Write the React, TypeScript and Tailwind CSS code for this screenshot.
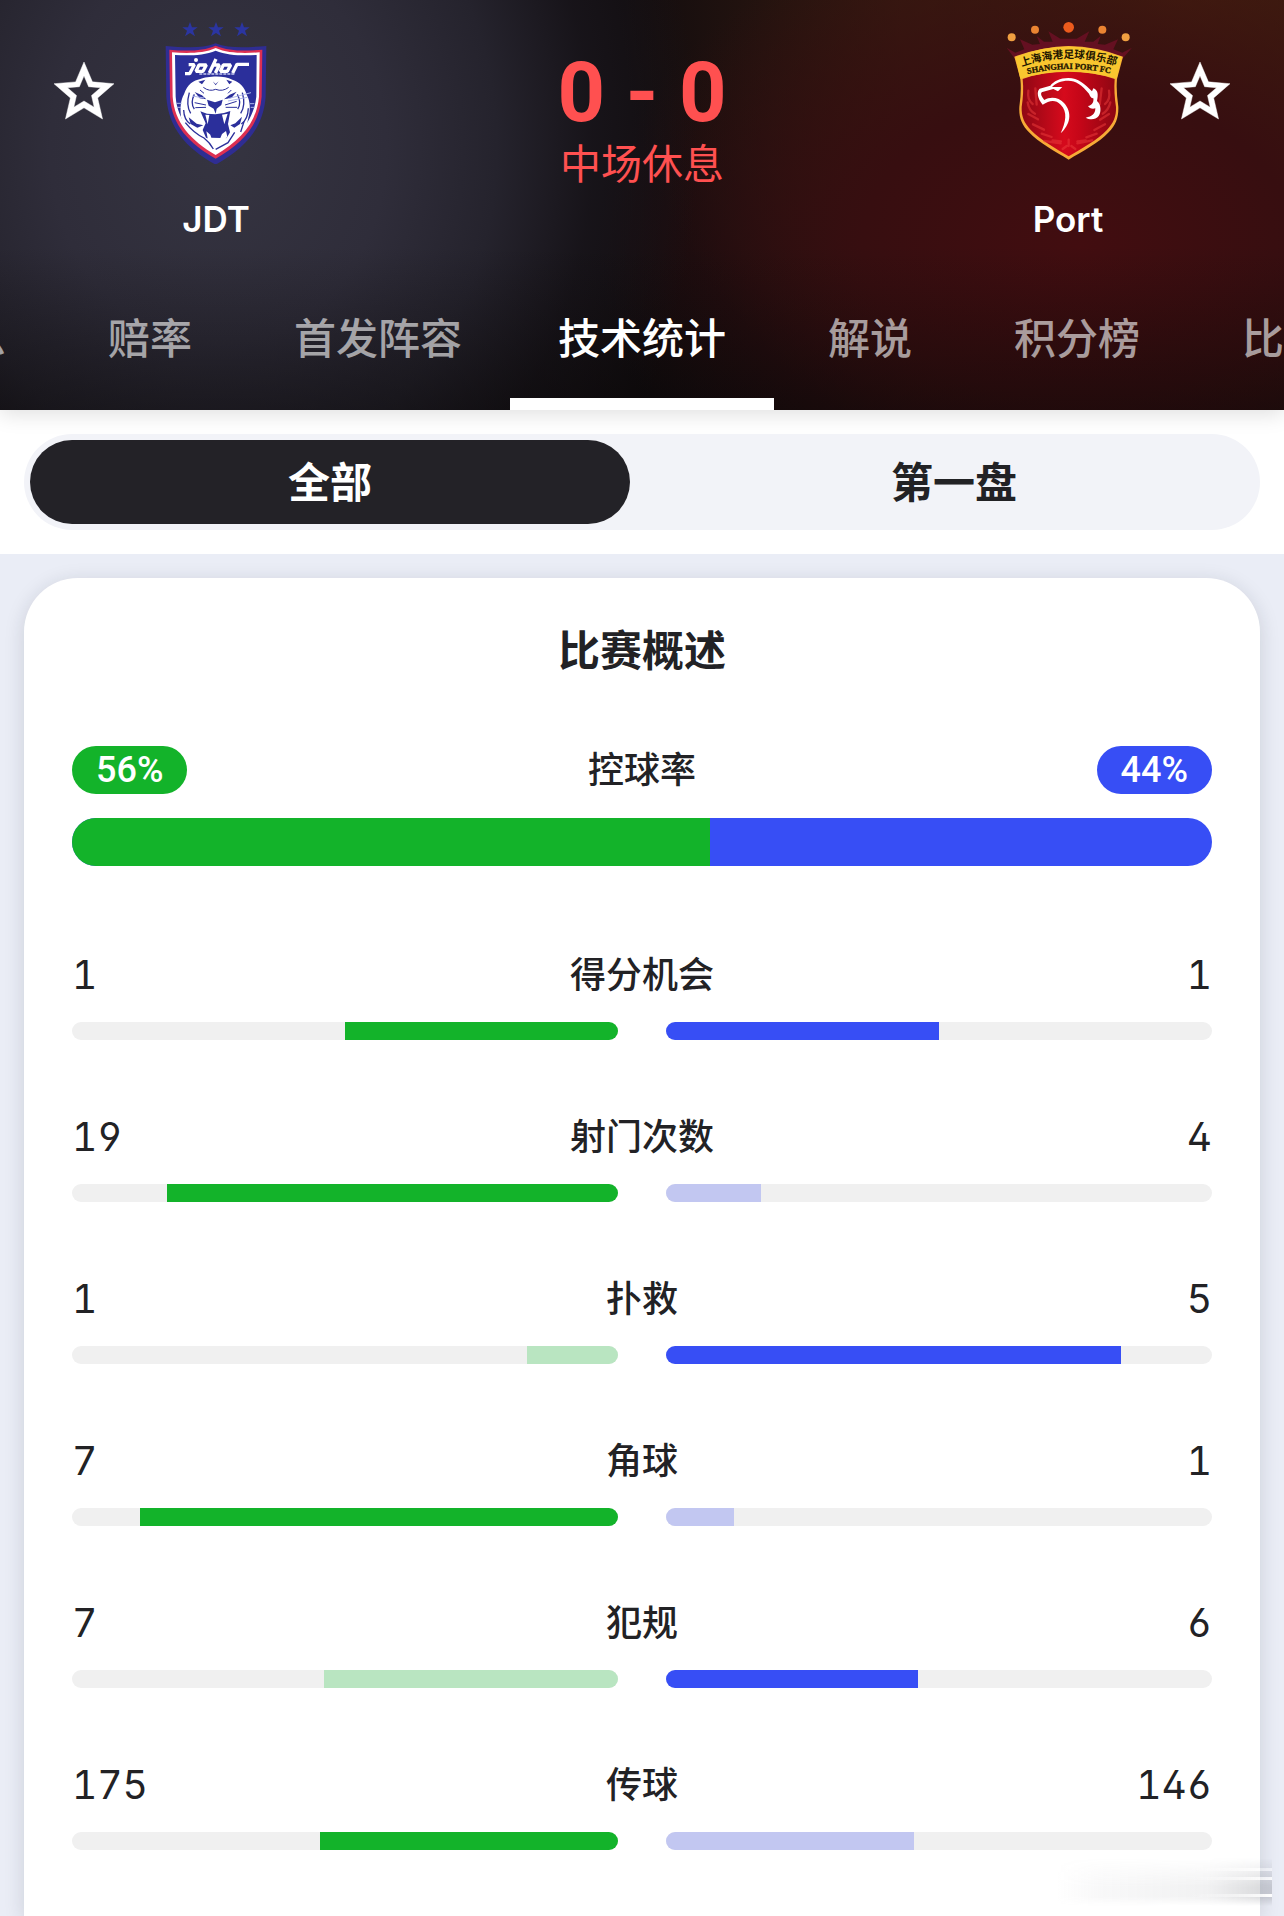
import { useState } from "react";

const FONT = "font-[Inter,'Noto_Sans_CJK_SC',sans-serif]";

type Stat = { label: string; home: number; away: number; lowerIsBetter?: boolean };

const stats: Stat[] = [
  { label: "得分机会", home: 1, away: 1 },
  { label: "射门次数", home: 19, away: 4 },
  { label: "扑救", home: 1, away: 5 },
  { label: "角球", home: 7, away: 1 },
  { label: "犯规", home: 7, away: 6, lowerIsBetter: true },
  { label: "传球", home: 175, away: 146 },
];

function StarButton({ label }: { label: string }) {
  return (
    <button type="button" aria-label={label} className="mt-14 size-18 shrink-0 text-white">
      <svg viewBox="0 0 24 24" className="size-18" fill="currentColor" stroke="currentColor" strokeWidth=".15">
        <path d="M22 9.24l-7.19-.62L12 2 9.19 8.63 2 9.24l5.46 4.73L5.82 21 12 17.27 18.18 21l-1.63-7.03L22 9.24zM12 15l-3.4 2.05.9-3.87-3-2.6 3.96-.35L12 6.6l1.54 3.63 3.96.35-3 2.6.9 3.87L12 15z" />
      </svg>
    </button>
  );
}

function SmallStar({ x }: { x: number }) {
  return (
    <path
      transform={`translate(${x} 89)`}
      d="M0-23 6-7 23-7 9 3 15 20 0 10-15 20-9 3-23-7-6-7Z"
      fill="#2b35a0"
    />
  );
}

function JohorCrest() {
  return (
    <svg viewBox="432 60 432 432" className="size-36" role="img" aria-label="Johor">
      <SmallStar x={570} />
      <SmallStar x={648} />
      <SmallStar x={726} />
      <path
        d="M497 138C550 142 605 147 647 130C690 147 745 142 799 138L797 290C790 385 735 445 647 494C560 445 505 385 499 290Z"
        fill="#2f2d92"
      />
      <path
        d="M508 149C555 153 605 155 647 137C690 155 740 153 787 149L785 290C778 375 728 430 647 476C567 430 515 375 510 290Z"
        fill="#dc2f52"
      />
      <path
        d="M516 157C560 160 610 161 647 144C685 161 735 160 779 157L777 290C770 368 722 421 647 465C573 421 523 368 518 290Z"
        fill="#fff"
      />
      <path
        d="M525 165C565 167 612 167 647 152C683 167 730 167 770 165L769 290C761 362 715 413 647 454C580 413 532 362 527 290Z"
        fill="#2b2f9b"
      />
      <g fill="none" stroke="#fff" strokeWidth="10" strokeLinejoin="bevel">
        <path d="M566 194H583L569 221H555M597 195H619L609 214H588ZM648 177 628 219M637 195H658L646 219M670 195H692L682 214H661ZM698 219 711 193H747" />
      </g>
      <path d="M598 222H706" stroke="#c9cdf2" strokeWidth="5" strokeDasharray="9 3" />
      <circle cx="588" cy="180" r="6" fill="#fff" />
      <path
        d="M552 283C562 251 581 242 601 237C621 229 672 225 697 239C719 247 734 260 740 284C751 302 752 331 745 353L741 373 727 398 706 418 680 438 647 457 618 440 588 416 554 380 543 351C540 322 542 301 552 283Z"
        fill="#fff"
      />
      <g fill="#2b2f9b">
        <path d="M601 334 621 341 646 343 672 339 691 333 684 372 690 397 680 414 647 423 618 413 608 390 617 370Z" />
        <path d="M621 299 645 307 668 299 664 315 650 326 647 341 641 326 626 317Z" />
        <path d="M584 276 606 286 619 298 599 295ZM710 275 689 284 672 298 694 294Z" />
        <path d="M595 245 616 239 606 253ZM697 245 679 239 688 253ZM638 244 647 252 656 244 647 256Z" />
        <path d="M566 352 590 371 610 376 592 383 572 372ZM726 350 706 370 691 376 703 383 720 372Z" />
      </g>
      <path
        d="M616 344 623 373 628 345ZM666 344 673 373 683 341ZM619 394 631 404 634 413 661 414 666 402 678 393 682 410 670 425 647 432 625 425Z"
        fill="#fff"
      />
      <g fill="none" stroke="#2b2f9b" strokeWidth="4">
        <path d="M568 278Q557 317 572 340M583 283Q570 309 583 327M727 278Q738 317 722 340M712 283Q726 309 713 327" />
        <path d="M551 330Q552 360 571 372M745 325Q744 358 724 372" />
        <path d="M556 368Q582 400 612 414 630 428 640 447M647 448 684 428 704 397M732 365 722 396" />
        <path d="M610 262Q628 276 647 268 668 276 686 262M600 270 612 280M694 270 684 280" strokeWidth="3" />
        <path d="M618 315 584 308M618 322 586 323M675 315 710 304M677 322 711 322" strokeWidth="3" />
      </g>
      <path
        d="M612 294 577 288M684 296 753 278M684 303 742 292M529 310H545M530 322H543M750 311H763M752 322H764"
        stroke="#aeb7ec"
        strokeWidth="3"
      />
    </svg>
  );
}

function PortCrest() {
  return (
    <svg viewBox="408 60 432 432" className="size-36" role="img" aria-label="Shanghai Port FC">
      <defs>
        <linearGradient id="port-red" x1="0" x2="1">
          <stop offset="0" stopColor="#8f0714" />
          <stop offset=".45" stopColor="#d60a1c" />
          <stop offset=".62" stopColor="#c50618" />
          <stop offset="1" stopColor="#8d0712" />
        </linearGradient>
        <path id="port-cn" d="M478 202Q625 148 775 199" />
        <path id="port-en" d="M483 227Q625 188 771 225" />
      </defs>
      <path
        d="M440 143 466 158 493 148 480 118 517 134 540 132 530 108 552 125 578 125 565 94 601 116 626 116 650 116 688 94 674 125 700 125 722 108 713 132 735 134 774 118 760 148 787 158 816 143 781 184H470Z"
        fill="#641021"
      />
      <circle cx="455" cy="112" r="12" fill="#f0a041" />
      <circle cx="525" cy="89" r="12" fill="#ea8432" />
      <circle cx="626" cy="82" r="16" fill="#ec5b1d" />
      <circle cx="727" cy="89" r="12" fill="#ea8432" />
      <circle cx="797" cy="112" r="12" fill="#f0a041" />
      <path
        d="M463 170Q550 139 626 138Q707 139 789 170L771 237Q768 274 775 320C776 352 768 374 746 397C719 428 665 455 626 479C587 455 535 428 507 397C485 374 476 352 478 320Q485 274 481 237Z"
        fill="#f7aa37"
      />
      <path
        d="M488 237Q558 213 626 214Q701 216 764 237Q761 276 768 321C769 350 761 368 740 391C714 419 663 447 626 469C589 447 540 419 513 391C492 368 484 350 485 321Q492 276 488 237Z"
        fill="url(#port-red)"
      />
      <path d="M466 171Q625 108 786 171L770 236Q625 194 481 236Z" fill="#f9c62f" />
      <g stroke="#ec3b3b" strokeWidth="7" strokeLinecap="round" opacity=".5" fill="none">
        <path d="M505 272Q501 300 518 312M503 307Q506 331 525 341M505 342 534 358M519 373 552 389M545 401 575 411M578 421 603 424M526 265 530 314M747 272Q752 300 735 312M751 307Q746 331 728 341M747 342 720 359M735 373 703 390M710 401 679 412M677 421 652 424M725 265 719 314M553 423 602 430M652 430 697 421M620 438 608 447M634 438 646 447M626 419V438" />
      </g>
      <path
        d="M548 314C532 295 529 274 539 266L571 257C581 244 600 234 625 234C654 234 675 252 696 274L700 265C715 270 715 286 711 303C724 312 724 339 716 348C707 359 691 361 677 353C697 350 706 341 706 325C697 329 687 324 684 318C696 317 702 306 700 295C693 295 689 287 687 281C666 255 647 242 625 242C602 242 586 250 576 261L607 261 594 274 580 267 547 276C538 279 548 294 553 300C571 289 597 292 612 309C638 337 631 374 602 400C617 367 624 335 602 314C585 297 568 302 548 314Z"
        fill="#fff"
      />
      <text fill="#211500" fontSize="32" fontWeight="700" fontFamily="Noto Sans CJK SC">
        <textPath href="#port-cn" startOffset="50%" textAnchor="middle">
          上海海港足球俱乐部
        </textPath>
      </text>
      <text fill="#241500" stroke="#241500" strokeWidth="1" fontSize="25" fontWeight="700" fontFamily="Liberation Serif">
        <textPath href="#port-en" startOffset="50%" textAnchor="middle">
          SHANGHAI PORT FC
        </textPath>
      </text>
    </svg>
  );
}

const tabBase = "flex h-36 min-w-48 shrink-0 items-center justify-center px-12 text-[42px] whitespace-nowrap";

function Tab({ children }: { children: string }) {
  return (
    <button type="button" role="tab" aria-selected={false} className={`${tabBase} font-medium text-white/60`}>
      {children}
    </button>
  );
}

const digits = "text-[39px] leading-[48px] [font-feature-settings:'tnum','cv02','ss01']";

function StatRow({ label, home, away, lowerIsBetter }: Stat) {
  const total = home + away;
  const homeLeads = home === away || home > away !== Boolean(lowerIsBetter);
  const awayLeads = home === away || !homeLeads;
  return (
    <li>
      <div className="grid grid-cols-[1fr_auto_1fr] items-center">
        <span className={digits}>{home}</span>
        <span className="text-4xl leading-[50px] font-medium">{label}</span>
        <span className={`${digits} text-right`}>{away}</span>
      </div>
      <div className="mt-[22px] grid grid-cols-2 gap-12">
        <div className="flex h-[18px] justify-end overflow-hidden rounded-full bg-[#f0f0f0]">
          <div
            className={homeLeads ? "bg-[#13b32a]" : "bg-[#b9e5c1]"}
            style={{ width: `${(home / total) * 100}%` }}
          />
        </div>
        <div className="flex h-[18px] overflow-hidden rounded-full bg-[#f0f0f0]">
          <div
            className={awayLeads ? "bg-[#374ef5]" : "bg-[#c2c7f1]"}
            style={{ width: `${(away / total) * 100}%` }}
          />
        </div>
      </div>
    </li>
  );
}

export default function App() {
  const [period, setPeriod] = useState(0);
  return (
    <div
      className={`${FONT} relative flex min-h-screen flex-col overflow-hidden bg-[#eaedf6] text-[#222225]`}
    >
      <header className="relative z-10 bg-[#110c0e] bg-[linear-gradient(to_bottom,transparent_60%,rgba(8,6,6,0.45)),radial-gradient(ellipse_480px_560px_at_17%_36%,#353441_0%,#2f2d3a_35%,#25232d_58%,rgba(26,23,30,0.7)_78%,transparent_100%),radial-gradient(ellipse_480px_340px_at_84%_60%,#420d10_0%,#370e10_45%,transparent_100%),radial-gradient(ellipse_560px_520px_at_92%_0%,#45200f_0%,#361a10_50%,transparent_100%)] shadow-[0_4px_20px_rgba(0,0,0,0.13)]">
        <div className="flex items-start gap-6 px-12 pb-6">
          <StarButton label="收藏 JDT" />
          <div className="flex w-36 flex-col items-center pt-5 text-white">
            <JohorCrest />
            <p className="mt-[30px] text-[35px] leading-[50px] font-semibold">JDT</p>
          </div>
          <div className="flex flex-1 flex-col items-center pt-[52px] text-[#ff5050]">
            <p className="font-[Roboto] text-[83px] leading-[82px] font-bold whitespace-pre">0 - 0</p>
            <p className="text-[41px] leading-[60px]">中场休息</p>
          </div>
          <div className="flex w-36 flex-col items-center pt-5 text-white">
            <PortCrest />
            <p className="mt-[30px] text-[35px] leading-[50px] font-semibold">Port</p>
          </div>
          <StarButton label="收藏 Port" />
        </div>
        <div role="tablist" className="-mt-0.5 flex overflow-hidden">
          <div className="flex min-w-0 flex-1 justify-end">
            <Tab>比赛信息</Tab>
            <Tab>赔率</Tab>
            <Tab>首发阵容</Tab>
          </div>
          <button
            type="button"
            role="tab"
            aria-selected={true}
            className={`${tabBase} border-y-12 border-t-transparent border-b-white font-medium text-white`}
          >
            技术统计
          </button>
          <div className="flex min-w-0 flex-1">
            <Tab>解说</Tab>
            <Tab>积分榜</Tab>
            <Tab>比赛</Tab>
          </div>
        </div>
      </header>

      <div className="bg-white p-6">
        <div className="grid grid-cols-2 gap-6 rounded-full bg-[#f2f3f8] p-1.5">
          {["全部", "第一盘"].map((name, i) => (
            <button
              key={name}
              type="button"
              aria-pressed={period === i}
              onClick={() => setPeriod(i)}
              className={`h-21 rounded-full text-[42px] font-bold ${period === i ? "bg-[#232227] text-white" : "text-[#222225]"}`}
            >
              {name}
            </button>
          ))}
        </div>
      </div>

      <main className="flex flex-1 flex-col px-6 pt-6">
        <section className="flex-1 rounded-t-[54px] bg-white px-12 pt-11 pb-15 shadow-[0_4px_20px_rgba(30,35,50,0.15)]">
          <h2 className="text-center text-[42px] leading-[58px] font-bold">比赛概述</h2>
          <div className="mt-[66px] grid grid-cols-[1fr_auto_1fr] items-center text-4xl leading-[48px] font-medium">
            <span className="justify-self-start rounded-full bg-[#13b32a] px-6 font-[Roboto] leading-[48px] text-white">56%</span>
            <span className="leading-[48px]">控球率</span>
            <span className="justify-self-end rounded-full bg-[#374ef5] px-6 font-[Roboto] leading-[48px] text-white">44%</span>
          </div>
          <div className="mt-6 flex h-12 overflow-hidden rounded-full bg-[#374ef5]">
            <div className="bg-[#13b32a]" style={{ width: "56%" }} />
          </div>
          <ul className="mt-21 flex flex-col gap-18">
            {stats.map((s) => (
              <StatRow key={s.label} {...s} />
            ))}
          </ul>
        </section>
      </main>

      <div
        aria-hidden="true"
        className="absolute right-3 bottom-2.5 h-12 w-54 bg-[linear-gradient(to_right,transparent,rgba(120,122,130,0.05)_20%,rgba(120,122,130,0.1)_70%,rgba(120,122,130,0.3))] [mask-image:linear-gradient(to_bottom,transparent,black_60%,black_80%,transparent)]"
      >
        <div className="mt-2.5 ml-auto h-[3px] w-20 bg-linear-to-r from-transparent to-white" />
        <div className="mt-1.5 ml-auto h-[3px] w-20 bg-linear-to-r from-transparent to-white" />
        <div className="mt-3.5 ml-auto h-[3px] w-20 bg-linear-to-r from-transparent to-white" />
      </div>
    </div>
  );
}
